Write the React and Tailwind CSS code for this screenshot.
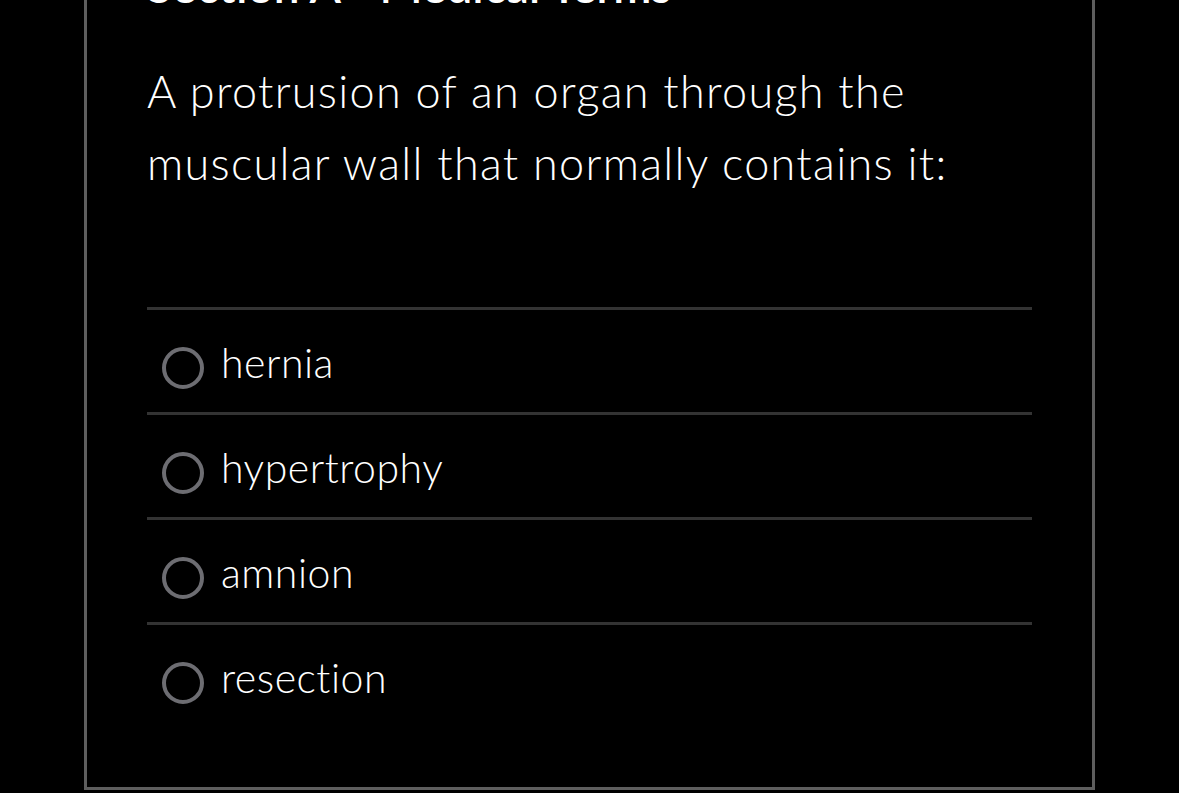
import React from 'react'

// Opciones de la pregunta
const options = ['hernia', 'hypertrophy', 'amnion', 'resection']

export default function App() {
  return (
    <div
      className="w-[1179px] h-[793px] overflow-hidden bg-black text-white"
      style={{ fontFamily: '"Lato Light", Lato, "Open Sans", sans-serif' }}
    >
      {/* Tarjeta de la pregunta */}
      <div className="ml-[84px] w-[1011px] h-[832px] -mt-[42px] border-[3px] border-t-0 border-[#5e5e5e] px-[60px]">
        <h2
          className="text-[46px] leading-[55px] font-semibold"
          style={{ fontFamily: 'Lato, sans-serif' }}
        >
          Section A - Medical Terms
        </h2>

        <p className="mt-[42px] text-[45px] leading-[72px] font-light tracking-[1.3px]">
          A protrusion of an organ through the muscular wall that normally contains it:
        </p>

        {/* Lista de respuestas */}
        <div className="mt-[108px]">
          {options.map((opt) => (
            <label
              key={opt}
              className="flex h-[105px] items-center gap-[17px] border-t-[3px] border-[#333333] pl-[15px] pt-[14px] cursor-pointer"
            >
              <span className="block h-[42px] w-[42px] shrink-0 rounded-full border-[4px] border-[#6d6d72]" />
              <span className="-mt-[12px] text-[41px] font-light leading-none tracking-[0.5px]">{opt}</span>
            </label>
          ))}
        </div>
      </div>
    </div>
  )
}
